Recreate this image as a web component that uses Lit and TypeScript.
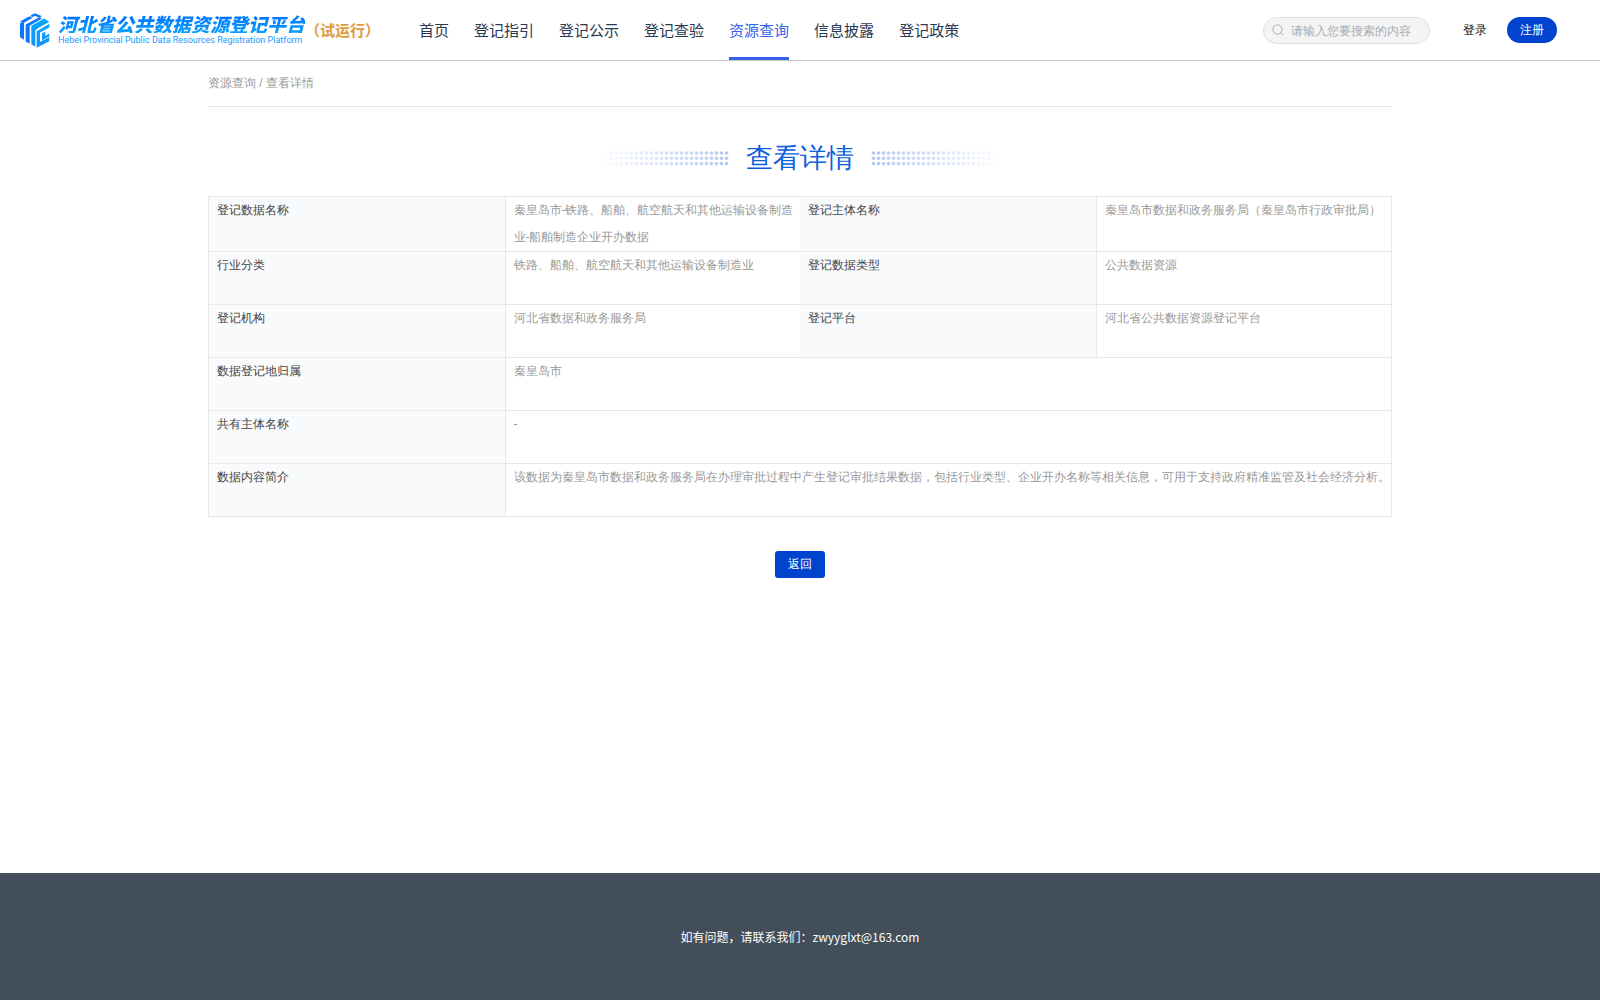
import { LitElement, html, css, svg } from "lit";
import { customElement } from "lit/decorators.js";
import { classMap } from "lit/directives/class-map.js";

const NAV = ["首页", "登记指引", "登记公示", "登记查验", "资源查询", "信息披露", "登记政策"];
const ACTIVE = "资源查询";

const PAIRS = [
  ["登记数据名称", "秦皇岛市-铁路、船舶、航空航天和其他运输设备制造业-船舶制造企业开办数据", "登记主体名称", "秦皇岛市数据和政务服务局（秦皇岛市行政审批局）"],
  ["行业分类", "铁路、船舶、航空航天和其他运输设备制造业", "登记数据类型", "公共数据资源"],
  ["登记机构", "河北省数据和政务服务局", "登记平台", "河北省公共数据资源登记平台"],
];

const SINGLES = [
  ["数据登记地归属", "秦皇岛市"],
  ["共有主体名称", "-"],
  ["数据内容简介", "该数据为秦皇岛市数据和政务服务局在办理审批过程中产生登记审批结果数据，包括行业类型、企业开办名称等相关信息，可用于支持政府精准监管及社会经济分析。"],
];

@customElement("site-header")
class SiteHeader extends LitElement {
  static styles = css`
    :host { display: block; }
    .bar {
      display: flex; align-items: center; height: 60px; padding: 0 43px 0 20px;
      border-bottom: 1px solid #c8c8c8; background: #fff;
    }
    .brand { display: flex; align-items: center; text-decoration: none; }
    .mark { display: block; width: 30px; height: 35px; margin-right: 8px; }
    .names { display: flex; flex-direction: column; white-space: nowrap; }
    .zh {
      font: italic 900 19px/19px "Noto Sans CJK SC", sans-serif;
      background: linear-gradient(#0077ff 20%, #0c9dff 90%);
      -webkit-background-clip: text; background-clip: text; color: transparent;
    }
    .en { font: 9px/14px Roboto, sans-serif; color: #1a9bff; }
    .trial { font: bold 15px/20px "Noto Sans CJK SC", sans-serif; color: #e09b3d; white-space: nowrap; }
    .nav { display: flex; gap: 25px; margin-left: 39px; height: 60px; }
    .item {
      box-sizing: border-box; height: 60px; border-bottom: 3px solid transparent;
      font: 15px/60px "Noto Sans CJK SC", sans-serif; color: #2a3852;
      text-decoration: none; white-space: nowrap;
    }
    .active { color: #3662e8; border-bottom-color: #3662e8; }
    .tools { display: flex; align-items: center; margin-left: auto; }
    .search {
      box-sizing: border-box; display: flex; align-items: center; gap: 7px; width: 167px; height: 27px;
      padding: 0 8px; border: 1px solid #dcdfe6; border-radius: 14px; background: #f4f4f4;
    }
    .glass { flex: none; width: 12px; height: 12px; }
    .field {
      min-width: 0; flex: 1; padding: 2px 0 0; border: 0; outline: 0; background: none;
      font: 12px/20px "Liberation Sans", sans-serif; color: #555;
    }
    .field::placeholder { color: #a8abb2; opacity: 1; }
    .login, .register { font: 12px/26px "Liberation Sans", sans-serif; padding: 0; border: 0; cursor: pointer; }
    .login { margin-left: 33px; background: none; color: #111; }
    .register { margin-left: 20px; width: 50px; border-radius: 13px; background: #0043ce; color: #fff; }
  `;

  render() {
    return html`
      <header class="bar">
        <a class="brand" href="#">
          <svg class="mark" viewBox="0 0 90 104" aria-hidden="true">
            <defs>
              <linearGradient id="lite" x1="0" y1="0" x2="0" y2="1">
                <stop offset="0" stop-color="#08a8ff" /><stop offset="1" stop-color="#1292ff" />
              </linearGradient>
            </defs>
            <g fill="#0a78fb">
              <path d="M0 30 12 24V80L0 72z" />
              <path d="M0 25 28 9 38 14 12 29z" />
              <path d="M32 6 45 0 66 9 57 14 45 8 36 12z" />
              <path d="M17 34 58 12 66 16 29 38V92L17 85z" />
            </g>
            <g fill="url(#lite)">
              <path d="M34 38 72 16 88 26 56 44 46 52V100L34 94z" />
              <path d="M50 54 88 32V43L60 58V86L88 72V84L50 104z" />
              <path d="M66 60 76 55V68L88 61V70L66 81z" />
            </g>
          </svg>
          <span class="names">
            <span class="zh">河北省公共数据资源登记平台</span>
            <span class="en">Hebei Provincial Public Data Resources Registration Platform</span>
          </span>
        </a>
        <span class="trial">（试运行）</span>
        <nav class="nav">
          ${NAV.map((n) => html`<a href="#" class=${classMap({ item: true, active: n === ACTIVE })}>${n}</a>`)}
        </nav>
        <div class="tools">
          <label class="search">
            <svg class="glass" viewBox="0 0 12 12" fill="none" stroke="#a8abb2" aria-hidden="true">
              <circle cx="5.5" cy="5.5" r="4.6" /><path d="M9 9l2 2" />
            </svg>
            <input class="field" type="text" aria-label="搜索" placeholder="请输入您要搜索的内容" />
          </label>
          <button class="login">登录</button>
          <button class="register">注册</button>
        </div>
      </header>
    `;
  }
}

@customElement("detail-title")
class DetailTitle extends LitElement {
  static styles = css`
    :host { display: flex; justify-content: center; align-items: center; gap: 17px; }
    .dots { width: 130px; height: 15px; }
    .flip { transform: scaleX(-1); }
    .text { margin: 0; font: 27px/40px "Liberation Sans", sans-serif; color: #0d5fdc; }
  `;

  private dots(cls: string) {
    const marks = [];
    for (let c = 0; c < 26; c++) {
      for (let r = 0; r < 3; r++) {
        marks.push(svg`<circle cx=${c * 5 + 2.5} cy=${r * 5.3 + 2} r="1.8" fill-opacity=${Math.min(1, (c + 1) / 25)} />`);
      }
    }
    return html`<svg class=${cls} viewBox="0 0 130 15" fill="#b6c9f2" aria-hidden="true">${marks}</svg>`;
  }

  render() {
    return html`${this.dots("dots")}<h1 class="text">查看详情</h1>${this.dots("dots flip")}`;
  }
}

@customElement("app-root")
class AppRoot extends LitElement {
  static styles = css`
    :host {
      display: flex; flex-direction: column; min-height: 100vh; background: #fff;
      font: 12px/27px "Liberation Sans", sans-serif; color: #999;
    }
    .main { flex: 1; width: 74%; margin: 0 auto; }
    .crumbs { line-height: 45px; border-bottom: 1px solid #e8e8e8; color: #999; }
    .crumb { color: inherit; text-decoration: none; }
    .title { margin: 31px 0 18px; }
    .table {
      width: 100%; table-layout: fixed; border-collapse: separate; border-spacing: 0;
      border: 1px solid #e8e8e8; border-bottom: 0;
    }
    .label, .value {
      box-sizing: border-box; height: 53px; padding: 0 0 0 8px; text-align: left;
      vertical-align: top; font-weight: normal; border-bottom: 1px solid #e8e8e8;
    }
    .label { background: #f9fafc; color: #444; }
    .value { border-left: 1px solid #e8e8e8; color: #999; }
    .actions { display: flex; justify-content: center; margin: 34px 0; }
    .back {
      width: 50px; padding: 0; border: 0; border-radius: 3px; background: #0043ce; color: #fff;
      font: inherit; cursor: pointer;
    }
    .footer {
      padding: 50px 0; text-align: center; background: #424e59; color: #fff;
      font: 12px/27px "Noto Sans CJK SC", sans-serif;
    }
  `;

  render() {
    return html`
      <site-header></site-header>
      <main class="main">
        <nav class="crumbs"><a class="crumb" href="#">资源查询</a> / <span>查看详情</span></nav>
        <detail-title class="title"></detail-title>
        <table class="table">
          <tbody>
            ${PAIRS.map(([a, b, c, d]) => html`<tr>
              <th class="label" scope="row">${a}</th><td class="value">${b}</td>
              <th class="label" scope="row">${c}</th><td class="value">${d}</td>
            </tr>`)}
            ${SINGLES.map(([a, b]) => html`<tr>
              <th class="label" scope="row">${a}</th><td class="value" colspan="3">${b}</td>
            </tr>`)}
          </tbody>
        </table>
        <div class="actions"><button class="back">返回</button></div>
      </main>
      <footer class="footer">如有问题，请联系我们：zwyyglxt@163.com</footer>
    `;
  }
}
